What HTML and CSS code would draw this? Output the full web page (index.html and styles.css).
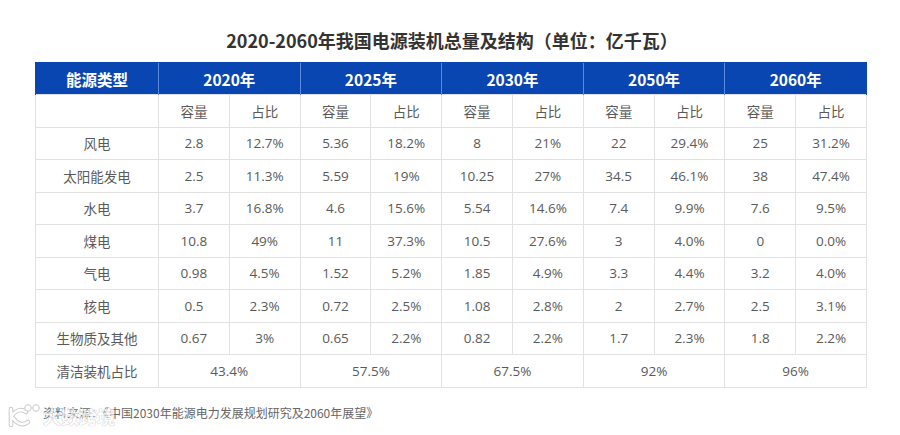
FILE: index.html
```html
<!DOCTYPE html>
<html lang="zh">
<head>
<meta charset="utf-8">
<title>2020-2060年我国电源装机总量及结构</title>
<link rel="stylesheet" href="styles.css">
</head>
<body>
<div class="page">
  <h1 class="title">2020-2060年我国电源装机总量及结构（单位：亿千瓦）</h1>
  <table class="grid">
    <colgroup>
      <col class="c-type">
      <col><col><col><col><col><col><col><col><col><col>
    </colgroup>
    <thead>
      <tr class="head">
        <th>能源类型</th>
        <th colspan="2">2020年</th>
        <th colspan="2">2025年</th>
        <th colspan="2">2030年</th>
        <th colspan="2">2050年</th>
        <th colspan="2">2060年</th>
      </tr>
    </thead>
    <tbody>
      <tr><td></td><td>容量</td><td>占比</td><td>容量</td><td>占比</td><td>容量</td><td>占比</td><td>容量</td><td>占比</td><td>容量</td><td>占比</td></tr>
      <tr><td>风电</td><td>2.8</td><td>12.7%</td><td>5.36</td><td>18.2%</td><td>8</td><td>21%</td><td>22</td><td>29.4%</td><td>25</td><td>31.2%</td></tr>
      <tr><td>太阳能发电</td><td>2.5</td><td>11.3%</td><td>5.59</td><td>19%</td><td>10.25</td><td>27%</td><td>34.5</td><td>46.1%</td><td>38</td><td>47.4%</td></tr>
      <tr><td>水电</td><td>3.7</td><td>16.8%</td><td>4.6</td><td>15.6%</td><td>5.54</td><td>14.6%</td><td>7.4</td><td>9.9%</td><td>7.6</td><td>9.5%</td></tr>
      <tr><td>煤电</td><td>10.8</td><td>49%</td><td>11</td><td>37.3%</td><td>10.5</td><td>27.6%</td><td>3</td><td>4.0%</td><td>0</td><td>0.0%</td></tr>
      <tr><td>气电</td><td>0.98</td><td>4.5%</td><td>1.52</td><td>5.2%</td><td>1.85</td><td>4.9%</td><td>3.3</td><td>4.4%</td><td>3.2</td><td>4.0%</td></tr>
      <tr><td>核电</td><td>0.5</td><td>2.3%</td><td>0.72</td><td>2.5%</td><td>1.08</td><td>2.8%</td><td>2</td><td>2.7%</td><td>2.5</td><td>3.1%</td></tr>
      <tr><td>生物质及其他</td><td>0.67</td><td>3%</td><td>0.65</td><td>2.2%</td><td>0.82</td><td>2.2%</td><td>1.7</td><td>2.3%</td><td>1.8</td><td>2.2%</td></tr>
      <tr><td>清洁装机占比</td><td colspan="2">43.4%</td><td colspan="2">57.5%</td><td colspan="2">67.5%</td><td colspan="2">92%</td><td colspan="2">96%</td></tr>
    </tbody>
  </table>
  <p class="source">资料来源：《中国2030年能源电力发展规划研究及2060年展望》</p>
  <div class="watermark" aria-hidden="true">
    <svg class="wm-logo" width="34" height="26" viewBox="0 0 34 26">
      <path d="M4 7 V23 M4 15 C9 7 15 7 19 10 M6 16 C10 22 16 24 21 20" fill="none" stroke="#b5b5b5" stroke-width="4.6" stroke-linecap="round"/>
      <path d="M4 7 V23 M4 15 C9 7 15 7 19 10 M6 16 C10 22 16 24 21 20" fill="none" stroke="#fff" stroke-width="2.6" stroke-linecap="round"/>
      <circle cx="21" cy="6" r="3.3" fill="#fff" stroke="#b5b5b5" stroke-width="1"/>
      <circle cx="29" cy="6" r="3.3" fill="#fff" stroke="#b5b5b5" stroke-width="1"/>
    </svg>
    <span class="wm-text">大数跨境</span>
  </div>
</div>
</body>
</html>
```

FILE: styles.css
```css
html, body {
  margin: 0;
  padding: 0;
  background: #ffffff;
}

.page {
  position: relative;
  width: 900px;
  height: 435px;
  padding-top: 28px;
  box-sizing: border-box;
  font-family: "Open Sans", "Noto Sans CJK SC", sans-serif;
}

.title {
  margin: 0 0 10px 0;
  padding-left: 4px;
  font-family: "Noto Sans CJK SC", sans-serif;
  font-size: 18px;
  line-height: 24px;
  font-weight: 700;
  color: #333333;
  text-align: center;
}

.grid {
  margin-left: 35px;
  width: 831px;
  border-collapse: collapse;
  table-layout: fixed;
}

.grid col {
  width: 70.8px;
}

.grid col.c-type {
  width: 123px;
}

.head th {
  height: 31px;
  padding: 0;
  background: #0a46b2;
  color: #ffffff;
  font-family: "Noto Sans CJK SC", sans-serif;
  font-size: 15.5px;
  font-weight: 700;
  text-align: center;
  border-left: 1px solid #5a8ae0;
  border-top: 1px solid #0a46b2;
}

.head th:first-child {
  border-left: 1px solid #0a46b2;
}

.head th:last-child {
  border-right: 1px solid #0a46b2;
}

.grid td {
  height: 31.5px;
  padding: 0;
  border: 1px solid #e2e2e2;
  color: #5a5a5a;
  font-size: 13.5px;
  text-align: center;
  white-space: nowrap;
}

.source {
  margin: 17px 0 0 43px;
  font-family: "Noto Sans CJK SC", sans-serif;
  font-size: 12px;
  line-height: 16px;
  color: #666666;
}

.watermark {
  position: absolute;
  left: 7px;
  top: 402px;
  display: flex;
  align-items: flex-end;
  gap: 2px;
  opacity: 0.7;
}

.wm-text {
  font-family: "Noto Sans CJK SC", sans-serif;
  font-size: 18px;
  font-weight: 700;
  line-height: 24px;
  color: #ffffff;
  text-shadow: 0 0 1px #a8a8a8, 0 0 1px #a8a8a8;
}
```
